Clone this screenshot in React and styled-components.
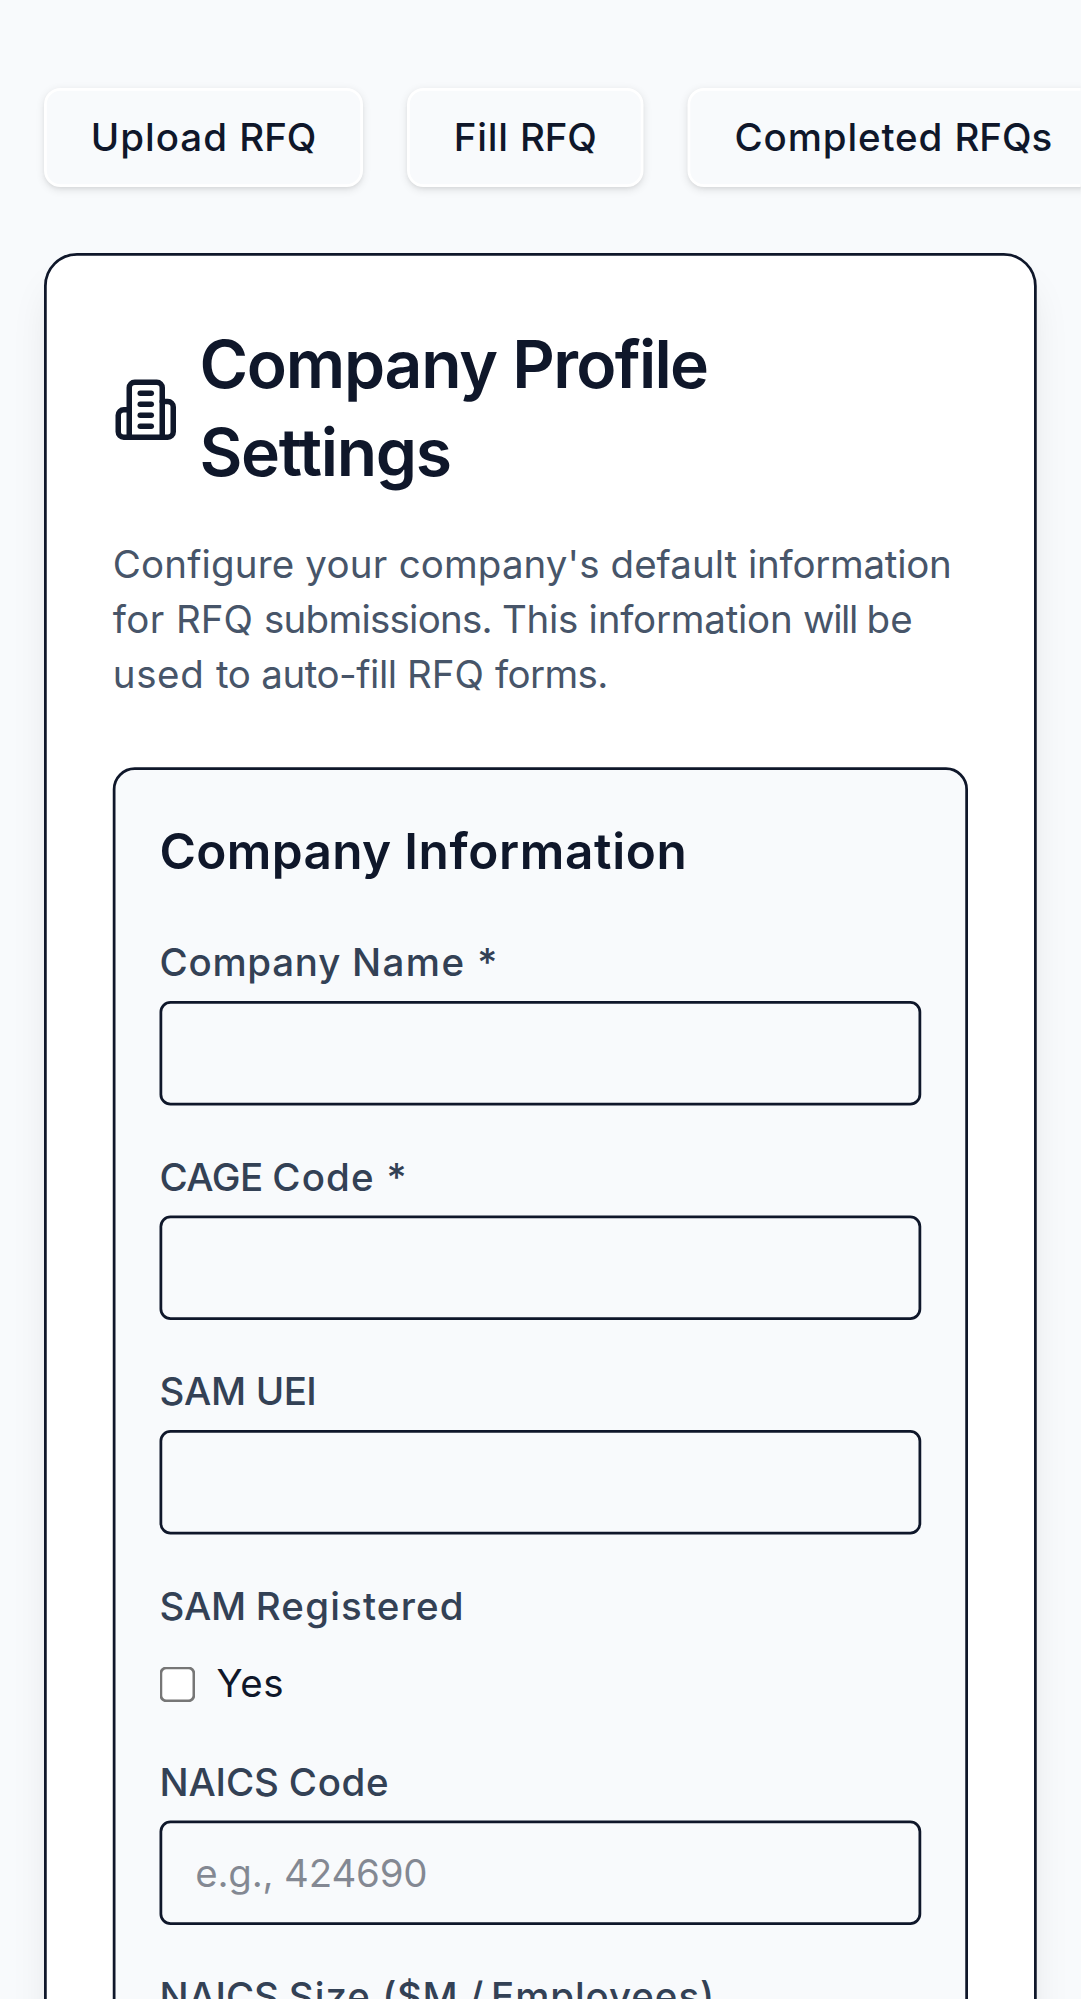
import React from "react";
import styled, { createGlobalStyle } from "styled-components";

const SCALE = 2.75;

const GlobalStyle = createGlobalStyle`
  *, *::before, *::after { box-sizing: border-box; }
  html, body {
    margin: 0;
    height: 100%;
    overflow: hidden;
    background: #f8fafc;
  }
  body {
    font-family: Inter, "Liberation Sans", sans-serif;
    color: #0f172a;
  }
`;

const Screen = styled.main`
  width: 393.2px;
  height: 727px;
  padding: 32px 16.2px 0 16px;
  overflow: hidden;
  background: #f8fafc;
  transform: scale(${SCALE});
  transform-origin: 0 0;
  font-size: 14px;
  line-height: 20px;
`;

const Tabs = styled.nav`
  display: flex;
  gap: 16px;
  margin-bottom: 24px;
`;

const TabButton = styled.button`
  flex: none;
  height: 36px;
  padding: 0 16px;
  border: 1px solid #ffffff;
  border-radius: 6px;
  background: #f8fafc;
  color: inherit;
  font: 500 14px/20px Inter, "Liberation Sans", sans-serif;
  white-space: nowrap;
  box-shadow: 0 1px 3px 0 rgba(0, 0, 0, 0.1), 0 1px 2px -1px rgba(0, 0, 0, 0.1);
`;

const Card = styled.section`
  padding: 24px;
  border: 1px solid #0f172a;
  border-radius: 12px;
  background: #ffffff;
  box-shadow: 0 10px 15px -3px rgba(0, 0, 0, 0.1),
    0 4px 6px -4px rgba(0, 0, 0, 0.1);
`;

const Title = styled.h1`
  display: flex;
  align-items: center;
  gap: 7.5px;
  margin: 0 0 14px;
  font-size: 24px;
  font-weight: 600;
  line-height: 32px;
`;

const TitleIcon = styled.svg`
  flex: none;
  width: 24px;
  height: 24px;
  fill: none;
  stroke: currentColor;
  stroke-width: 2;
  stroke-linecap: round;
  stroke-linejoin: round;
`;

const Description = styled.p`
  margin: 0 0 24px;
  color: #475569;
`;

const Panel = styled.form`
  display: flex;
  flex-direction: column;
  gap: 16px;
  padding: 16px;
  border: 1px solid #0f172a;
  border-radius: 8px;
  background: #f8fafc;
`;

const PanelTitle = styled.h2`
  margin: 0;
  font-size: 18px;
  font-weight: 600;
  line-height: 28px;
`;

const FieldGroup = styled.div`
  display: flex;
  flex-direction: column;
  gap: ${(p) => p.$gap || 4}px;
`;

const Label = styled.label`
  font-weight: 500;
  color: #334155;
`;

const Input = styled.input`
  width: 100%;
  height: 38px;
  padding: 7.4px 12px 8.6px;
  border: 1px solid #0f172a;
  border-radius: 4px;
  background: #f8fafc;
  color: inherit;
  font: 400 14px/20px Inter, "Liberation Sans", sans-serif;
  letter-spacing: -0.08px;
  &::placeholder {
    color: rgba(15, 23, 42, 0.5);
    opacity: 1;
  }
`;

const CheckRow = styled.label`
  display: flex;
  align-items: center;
  gap: 7.7px;
`;

const Checkbox = styled.input`
  width: 13px;
  height: 13px;
  margin: 1px 0 0;
`;

const context = document.createElement("canvas").getContext("2d");

/* Letter spacing that gives a run of text the wanted advance. */
function trackingFor(run, target, weight, size) {
  context.font = `${weight} ${size}px Inter`;
  return (target - context.measureText(run).width) / run.length;
}

/* Takes the words of a text and the advance of each, its space included. */
function FittedText({ text, advances, weight = 400, size = 14 }) {
  const words = text.split(" ");
  return (
    <span>
      {words.map((word, i) => {
        const run = i < words.length - 1 && !advances.breaks?.includes(i) ? `${word} ` : word;
        const spacing = trackingFor(run, advances.widths[i], weight, size);
        return (
          <React.Fragment key={i}>
            <span style={{ letterSpacing: `${spacing.toFixed(3)}px` }}>{run}</span>
            {advances.breaks?.includes(i) && " "}
          </React.Fragment>
        );
      })}
    </span>
  );
}

function BuildingIcon() {
  return (
    <TitleIcon viewBox="0 0 24 24" aria-hidden="true">
      <path d="M6 22V4a2 2 0 0 1 2-2h8a2 2 0 0 1 2 2v18Z" />
      <path d="M6 12H4a2 2 0 0 0-2 2v6a2 2 0 0 0 2 2h2" />
      <path d="M18 9h2a2 2 0 0 1 2 2v9a2 2 0 0 1-2 2h-2" />
      <path d="M10 6h4" />
      <path d="M10 10h4" />
      <path d="M10 14h4" />
      <path d="M10 18h4" />
    </TitleIcon>
  );
}

function TextField({ id, label, widths, placeholder }) {
  return (
    <FieldGroup>
      <Label htmlFor={id}>
        <FittedText text={label} advances={{ widths }} weight={500} />
      </Label>
      <Input id={id} type="text" placeholder={placeholder} />
    </FieldGroup>
  );
}

const tabs = [
  { text: "Upload RFQ", widths: [54, 28] },
  { text: "Fill RFQ", widths: [24, 28] },
  { text: "Completed RFQs", widths: [80, 35.5] },
];

const description = {
  text: "Configure your company's default information for RFQ submissions. This information will be used to auto-fill RFQ forms.",
  advances: {
    widths: [70, 34, 77, 50, 74, 23, 32, 86.5, 31.5, 78, 23, 17, 37.5, 16.5, 53, 32, 41],
    breaks: [4, 11],
  },
};

export default function App() {
  return (
    <>
      <GlobalStyle />
      <Screen>
        <Tabs>
          {tabs.map(({ text, widths }) => (
            <TabButton key={text} type="button">
              <FittedText text={text} advances={{ widths }} weight={500} />
            </TabButton>
          ))}
        </Tabs>
        <Card>
          <Title>
            <BuildingIcon />
            <FittedText
              text="Company Profile Settings"
              advances={{ widths: [113.8, 70.9, 91.4], breaks: [1] }}
              weight={600}
              size={24}
            />
          </Title>
          <Description>
            <FittedText {...description} />
          </Description>
          <Panel>
            <PanelTitle>
              <FittedText
                text="Company Information"
                advances={{ widths: [89, 103] }}
                weight={600}
                size={18}
              />
            </PanelTitle>
            <TextField id="company" label="Company Name *" widths={[70, 45.5, 7.5]} />
            <TextField id="cage" label="CAGE Code *" widths={[41, 41.5, 7.5]} />
            <TextField id="uei" label="SAM UEI" widths={[35, 22]} />
            <FieldGroup $gap={8}>
              <Label as="span">
                <FittedText
                  text="SAM Registered"
                  advances={{ widths: [35, 76] }}
                  weight={500}
                />
              </Label>
              <CheckRow>
                <Checkbox type="checkbox" />
                <FittedText text="Yes" advances={{ widths: [24.7] }} />
              </CheckRow>
            </FieldGroup>
            <TextField
              id="naics"
              label="NAICS Code"
              widths={[47, 36.5]}
              placeholder="e.g., 424690"
            />
            <TextField
              id="size"
              label="NAICS Size ($M / Employees)"
              widths={[47, 34, 31.5, 8, 81.5]}
            />
          </Panel>
        </Card>
      </Screen>
    </>
  );
}
